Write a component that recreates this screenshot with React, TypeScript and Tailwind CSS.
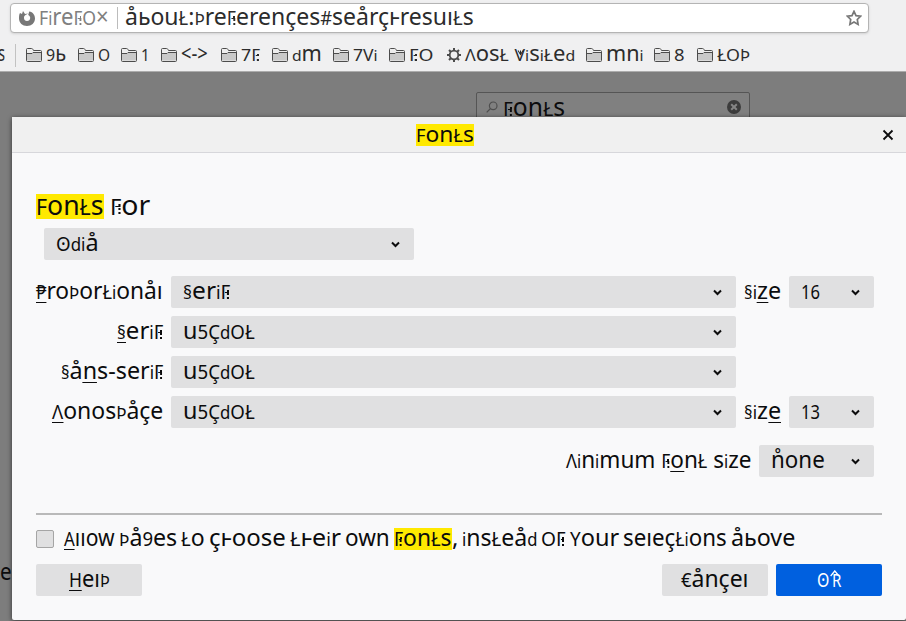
import React, { useLayoutEffect, useRef, useState } from "react";

type GlyphProps = { ch: string };

// Unicase lettering: tall glyphs are reduced so that every letter shares one height.
function Glyph({ ch }: GlyphProps) {
  if (ch === "Ƒ")
    return (
      <span className="relative inline-block text-[0.8em] leading-none">
        Γ
        <span className="absolute right-[12%] top-[40%] h-[46%] border-r-2 border-dotted border-current" />
        <span className="absolute right-[12%] top-[50%] w-[40%] border-t border-current" />
      </span>
    );
  if (ch === "Ķ")
    return (
      <span className="relative ml-[3px] inline-block text-[0.76em] leading-none">
        R
        <svg viewBox="0 0 12 7" className="absolute -left-[3px] -top-[1px] h-[7px] w-[13px]" fill="none" stroke="currentColor" strokeWidth="1.600">
          <path d="M1 6 6 1l5 5" />
        </svg>
      </span>
    );
  if (ch === "Ṽ")
    return (
      <span className="relative inline-block text-[0.8em] leading-none">
        V
        <svg viewBox="0 0 10 6" className="absolute left-[2px] top-[3px] h-[6px] w-[8px]" fill="none" stroke="currentColor" strokeWidth="1.200">
          <path d="M2 0 5 5 8 0M5 0v5" />
        </svg>
      </span>
    );
  if (/^[Þ]$/.test(ch)) return <span className="text-[0.74em]">{ch}</span>;
  if (/^[A-ZŁΛ0-9ʘ₱€Ç#]$/.test(ch)) return <span className="text-[0.8em]">{ch}</span>;
  if (/^[di§]$/.test(ch)) return <span className="text-[0.72em]">{ch}</span>;
  return <>{ch}</>;
}

const RUNS = /[ƑĶṼÞA-ZŁΛ0-9ʘ₱€Ç#di§]|[^ƑĶṼÞA-ZŁΛ0-9ʘ₱€Ç#di§]+/gu;

type TextProps = { children: string; w: number; size?: string; dy?: number; className?: string };

// Condenses a run of text to a given width. Letters between underscores are access keys.
function T({ children, w, size = "text-[24px]", dy = -2, className = "" }: TextProps) {
  const ref = useRef<HTMLSpanElement>(null);
  const [scale, setScale] = useState(1);
  useLayoutEffect(() => {
    if (ref.current) setScale(w / ref.current.offsetWidth);
  }, [w, children]);
  return (
    <span className={`inline-flex h-6 shrink-0 items-center whitespace-pre ${className}`} style={{ width: w }}>
      <span
        ref={ref}
        className={`block h-6 shrink-0 origin-left leading-6 ${size}`}
        style={{ transform: `translateY(${dy}px) scaleX(${scale})` }}
      >
        {children.split("_").map((part, i) => {
          const glyphs = (part.match(RUNS) ?? []).map((c, j) => <Glyph key={j} ch={c} />);
          return i % 2 ? (
            <span key={i} className="-mb-1 inline-block h-[24px] border-b border-current leading-[22px]">{glyphs}</span>
          ) : (
            <React.Fragment key={i}>{glyphs}</React.Fragment>
          );
        })}
      </span>
    </span>
  );
}

function Folder() {
  return (
    <svg viewBox="0 0 16 14" className="h-[14px] w-4 shrink-0">
      <path d="M.5 12.5v-11q0-1 1-1h4q1 0 1.500 1l.5 1h7q1 0 1 1v9q0 1-1 1h-13q-1 0-1-1Z" fill="#ededed" stroke="#4c4c4c" />
      <path d="M1 5.500h5l1-1h8v8H1z" fill="#c9c9c9" />
      <path d="M.5 5.500H6l1-1h8.500" fill="none" stroke="#4c4c4c" />
    </svg>
  );
}

function Gear() {
  return (
    <svg viewBox="0 0 16 16" className="h-4 w-4 shrink-0" fill="none" stroke="#4c4c4c">
      <circle cx="8" cy="8" r="4.300" strokeWidth="1.800" />
      <path d="M8 1v2.500M8 12.500V15M1 8h2.500M12.500 8H15M3 3l2 2M11 11l2 2M13 3l-2 2M5 11l-2 2" strokeWidth="2" />
    </svg>
  );
}

function Select({ text, w, className }: { text: string; w: number; className: string }) {
  return (
    <div className={`flex h-8 shrink-0 items-center justify-between rounded-[2px] bg-[#e0e0e1] pl-3 pr-[13px] ${className}`}>
      <T w={w}>{text}</T>
      <svg viewBox="0 0 11 7" className="h-[7px] w-[11px]" fill="none" stroke="#0c0c0d" strokeWidth="2">
        <path d="M2 1.500 5.500 5 9 1.500" />
      </svg>
    </div>
  );
}

const bookmarks = [
  { label: "9ь", text: 20, cell: "w-[52px]" },
  { label: "O", text: 12, cell: "w-[43px]" },
  { label: "1", text: 9, cell: "w-[40px]" },
  { label: "<->", text: 27, cell: "w-[60px]" },
  { label: "7Ƒ", text: 19, cell: "w-[51px]" },
  { label: "dm", text: 30, cell: "w-[61px]" },
  { label: "7Vi", text: 25, cell: "w-[56px]" },
  { label: "ƑO", text: 24, cell: "w-[57px]" },
  { label: "ΛosŁ ṼisiŁed", text: 110, cell: "w-[140px]", gear: true },
  { label: "mni", text: 38, cell: "w-[68px]" },
  { label: "8", text: 11, cell: "w-[43px]" },
  { label: "ŁOÞ", text: 33, cell: "w-[60px]" },
];

const rows = [
  { label: "_₱_roÞorŁionåı", lw: 127, value: "§eriƑ", vw: 47, size: "16", sizeLabel: "§i_z_e" },
  { label: "_§_eriƑ", lw: 46, value: "u5ÇdOŁ", vw: 72 },
  { label: "§å_n_s-seriƑ", lw: 102, value: "u5ÇdOŁ", vw: 72 },
  { label: "_Λ_onosÞåçe", lw: 111, value: "u5ÇdOŁ", vw: 72, size: "13", sizeLabel: "§iz_e_" },
];

const before: [string, number][] = [["_A_ııow", 51], ["Þå9es", 58], ["Ło", 24], ["çⱶoose", 77], ["Łⱶeir", 51], ["own", 45]];
const after: [string, number][] = [["insŁeåd", 75], ["OƑ", 25], ["Your", 49], ["seıeçŁions", 104], ["åьove", 64]];

export default function App() {
  return (
    <div className="relative flex h-[621px] w-[906px] flex-col overflow-hidden bg-[#7d7d7d] font-['Noto_Sans','DejaVu_Sans',sans-serif] text-[#0c0c0d]">
      <header className="h-[72px] shrink-0 border-b border-[#acacac] bg-[#f0f0f1] pt-[3px] text-[#2c2c2c]">
        <div className="ml-[10px] flex h-[30px] w-[859px] items-center rounded-[4px] border border-[#b4b4b4] bg-white pl-2 shadow-sm">
          <svg viewBox="0 0 16 16" className="h-4 w-4 shrink-0">
            <path d="M1 3 3 4 4 1l2 3 3-.5C7 5 5 5 5 8c0 2 1.300 3 3 3s3.200-1 3.200-3c0-1.500-.8-2.500-2-3l1-3.500C14 2 16 5 16 8.500 16 13 12.500 16 8 16S0 13 0 8.500C0 6 .2 4 1 3Z" fill="#777" />
          </svg>
          <T w={70} className="ml-[4px] text-[#808080]">FireƑO×</T>
          <div className="ml-[8px] mr-[7px] h-[22px] w-px bg-[#bcbcbc]" />
          <T w={349}>åьouŁ:ÞreƑerençes#seårçⱶresuıŁs</T>
          <svg viewBox="0 0 16 16" className="ml-auto mr-[6px] h-4 w-4" fill="none" stroke="#777" strokeWidth="1.700">
            <path d="m8 1.300 2 4.300 4.700.6-3.400 3.300.8 4.900L8 12l-4.100 2.400.8-4.900L1.300 6.200 6 5.600Z" />
          </svg>
        </div>
        <div className="flex h-11 items-center">
          <T w={7} size="text-[21px]" className="-ml-0.5">s</T>
          <div className="ml-[10px] mr-[10px] h-[23px] w-px bg-[#c2c2c2]" />
          {bookmarks.map((b) => (
            <div key={b.label} className={`flex shrink-0 items-center ${b.cell} ${b.gear ? "gap-[3px]" : "gap-1"}`}>
              {b.gear ? <Gear /> : <Folder />}
              <T w={b.text} size="text-[21px]">{b.label}</T>
            </div>
          ))}
        </div>
      </header>

      <main className="flex flex-1 flex-col">
        <div className="ml-[476px] mt-5 flex h-8 w-[274px] items-center rounded-[2px] border border-[#555] bg-[#808080] pl-[9px] pr-2">
          <svg viewBox="0 0 12 12" className="-mt-0.5 h-3 w-3" fill="none" stroke="#4e4e4e" strokeWidth="1.200">
            <circle cx="7.200" cy="4.800" r="3.800" />
            <path d="M4.500 7.500.7 11.300" />
          </svg>
          <T w={62} size="text-[25px]" dy={-2} className="ml-[5px]">ƑonŁs</T>
          <svg viewBox="0 0 14 14" className="-mt-0.5 ml-auto h-[14px] w-[14px]">
            <circle cx="7" cy="7" r="7" fill="#3c3c3c" />
            <path d="m4.200 4.200 5.600 5.600m0-5.600L4.200 9.800" stroke="#858585" strokeWidth="2" />
          </svg>
        </div>
        <div className="mt-auto pb-[33px]">
          <T w={12}>e</T>
        </div>
      </main>

      <section className="absolute left-3 top-[117px] flex h-[503px] w-[894px] flex-col rounded-[2px] bg-[#f9f9fa] shadow-[0_1px_5px_rgba(0,0,0,0.6)]">
        <div className="flex h-9 shrink-0 items-center border-b border-[#d7d7db] bg-[#f0f0f0] pl-[404px] pr-3">
          <T w={58} size="text-[22px]" className="h-[22px]! bg-[#ffe900]">FonŁs</T>
          <svg viewBox="0 0 12 12" className="ml-auto h-3 w-3" stroke="#0c0c0d" strokeWidth="1.800">
            <path d="m1.500 1.500 9 9m0-9-9 9" />
          </svg>
        </div>

        <div className="flex flex-1 flex-col px-6 pt-[41px]">
          <div className="flex h-[25px] items-center gap-[6px]">
            <T w={68} size="text-[27px]" className="h-[25px]! bg-[#ffe900]">FonŁs</T>
            <T w={40} size="text-[27px]">Ƒor</T>
          </div>
          <div className="ml-2 mt-[9px] flex">
            <Select text="ʘdiå" w={43} className="w-[370px]" />
          </div>

          <div className="mt-4 flex flex-col gap-2">
            {rows.map((r, i) => (
              <div key={i} className="flex items-center gap-2">
                <div className="flex w-[127px] justify-end">
                  <T w={r.lw}>{r.label}</T>
                </div>
                <Select text={r.value} w={r.vw} className="w-[565px]" />
                {r.size && r.sizeLabel && (
                  <>
                    <T w={37}>{r.sizeLabel}</T>
                    <Select text={r.size} w={19} className="w-[85px]" />
                  </>
                )}
              </div>
            ))}
          </div>

          <div className="mr-2 mt-[17px] flex items-center justify-end gap-2">
            <T w={185}>Λinimum Ƒ_o_nŁ size</T>
            <Select text="n̊one" w={54} className="w-[115px]" />
          </div>

          <div className="mt-9 h-[2px] shrink-0 bg-[#b9b9b9]" />

          <div className="mt-3 flex h-6 items-center gap-1">
            <div className="mr-[6px] h-[18px] w-[18px] shrink-0 rounded-[2px] border border-[#a5a5a5] bg-[#e0e0e1]" />
            {before.map(([t, w]) => <T key={t} w={w}>{t}</T>)}
            <div className="flex items-center">
              <T w={58} className="h-[22px]! bg-[#ffe900]">ƑonŁs</T>
              <T w={6}>,</T>
            </div>
            {after.map(([t, w]) => <T key={t} w={w}>{t}</T>)}
          </div>

          <div className="mt-[13px] flex gap-2">
            <button className="mr-auto flex h-8 w-[106px] items-center justify-center rounded-[2px] bg-[#e0e0e1]">
              <T w={41}>_H_eıÞ</T>
            </button>
            <button className="flex h-8 w-[106px] items-center justify-center rounded-[2px] bg-[#e0e0e1]">
              <T w={68}>€ånçeı</T>
            </button>
            <button className="flex h-8 w-[106px] items-center justify-center rounded-[2px] bg-[#0060df] text-white">
              <T w={24}>ʘĶ</T>
            </button>
          </div>
        </div>
      </section>
    </div>
  );
}
